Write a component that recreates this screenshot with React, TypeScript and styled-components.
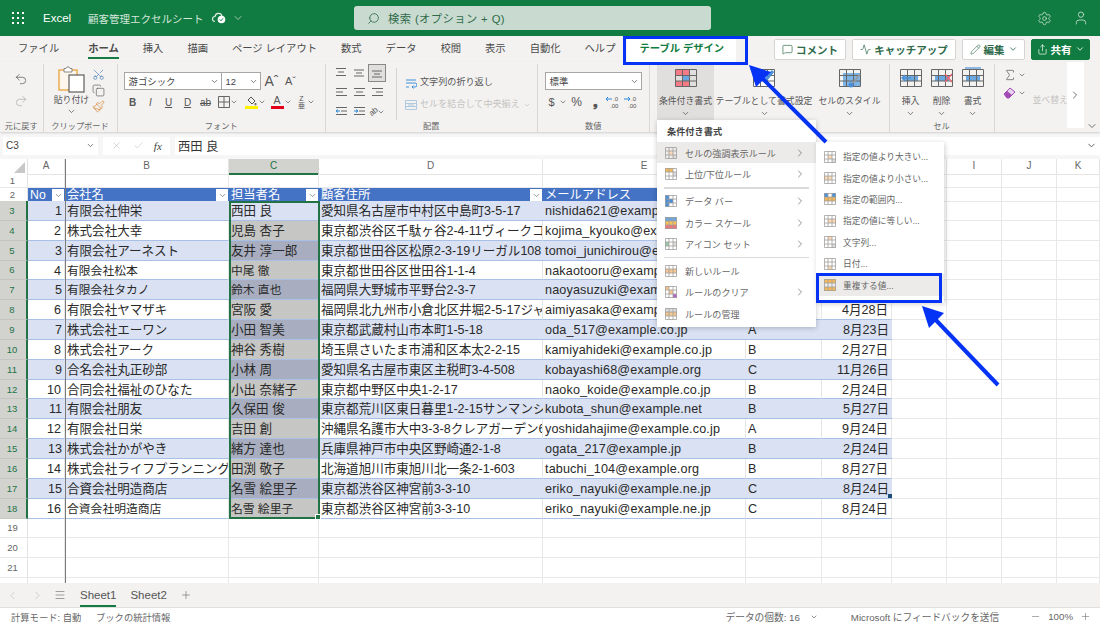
import React from "react";
import styled, {createGlobalStyle} from "styled-components";
import {Search, Settings, User, ChevronDown, ChevronRight, ChevronLeft, MessageSquare, Pencil, Share, Undo2, Redo2, Scissors, Copy, Paintbrush, X, Check, Sigma, Menu, Plus, Minus, Activity} from "lucide-react";

const GREEN = "#107c41";
const CHROME = "#f3f2f1";
const COLS = "28px 37px 164px 90px 224px 203px 76px 70px 55px 55px 55px 43px";

const Global = createGlobalStyle`
  html, body { margin: 0; padding: 0; background: #fff; }
  body { font-family: "Liberation Sans", "Noto Sans CJK JP", sans-serif; color: #333; }
`;

const Page = styled.div`
  position: relative;
  width: 1100px;
  height: 625px;
  overflow: hidden;
  display: flex;
  flex-direction: column;
`;

/* title bar */
const TitleBar = styled.div`
  height: 36px;
  flex: none;
  background: ${GREEN};
  display: flex;
  align-items: center;
  color: #fff;
`;
const Waffle = styled.div`
  width: 12px;
  margin-left: 12px;
  display: grid;
  grid-template-columns: repeat(3, 2px);
  gap: 3px;
  & > i { width: 2px; height: 2px; background: #fff; display: block; }
`;
const AppName = styled.span`
  margin-left: 19px;
  font-size: 11.5px;
  width: 45px;
`;
const DocName = styled.span`
  font-size: 10.5px;
  color: #d5e6dc;
  width: 124px;
`;
const DocIcons = styled.div`
  width: 142px;
  display: flex;
  align-items: center;
  gap: 6px;
  color: #d5e6dc;
`;
const SearchBox = styled.div`
  width: 357px;
  height: 24px;
  background: #c9dbd0;
  border-radius: 3px;
  display: flex;
  align-items: center;
  gap: 8px;
  padding-left: 13px;
  box-sizing: border-box;
  color: #2f6a4a;
  font-size: 11.3px;
  letter-spacing: .4px;
`;
const TitleRight = styled.div`
  margin-left: auto;
  display: flex;
  align-items: center;
  gap: 21px;
  padding-right: 11px;
  color: #cfe3d7;
`;

/* tab row */
const TabRow = styled.div`
  height: 26px;
  flex: none;
  background: ${CHROME};
  display: flex;
  align-items: center;
  padding-left: 18px;
  box-sizing: border-box;
  gap: 24px;
`;
const Tab = styled.span<{$active?: boolean}>`
  position: relative;
  font-size: 10.3px;
  line-height: 26px;
  color: #4a4a4a;
  font-weight: ${p => (p.$active ? 700 : 400)};
  ${p => p.$active && `
    margin-left: 5px;
    &::after { content: ""; position: absolute; left: 0; right: 0; bottom: 3px; height: 2px; background: ${GREEN}; }
  `}
`;
const DesignTab = styled.span`
  position: relative;
  z-index: 1;
  align-self: flex-start;
  height: 29px;
  padding: 0 12px;
  margin-left: -12px;
  background: #fff;
  font-size: 10.3px;
  line-height: 26px;
  font-weight: 700;
  color: ${GREEN};
`;
const TabActions = styled.div`
  margin-left: auto;
  display: flex;
  gap: 6px;
  padding-right: 10px;
`;
const ActionBtn = styled.div<{$w: number; $primary?: boolean}>`
  width: ${p => p.$w}px;
  height: 21px;
  box-sizing: border-box;
  display: flex;
  align-items: center;
  justify-content: center;
  gap: 3px;
  font-size: 10.5px;
  font-weight: 700;
  border-radius: 2px;
  background: ${p => (p.$primary ? GREEN : "#fff")};
  color: ${p => (p.$primary ? "#fff" : "#2f6a4a")};
  border: 1px solid ${p => (p.$primary ? GREEN : "#d6d4d2")};
`;

/* ribbon */
const Ribbon = styled.div`
  height: 70px;
  flex: none;
  background: ${CHROME};
  display: flex;
  box-shadow: 0 1px 2px rgba(0,0,0,.16);
  position: relative;
`;
const Group = styled.div<{$w: number; $last?: boolean}>`
  width: ${p => p.$w}px;
  flex: none;
  box-sizing: border-box;
  display: flex;
  flex-direction: column;
  margin: 2px 0 0;
  border-right: ${p => (p.$last ? "none" : "1px solid #dad8d6")};
`;
const GroupBody = styled.div<{$col?: boolean; $pad?: string; $gap?: number}>`
  flex: 1;
  min-height: 0;
  display: flex;
  flex-direction: ${p => (p.$col ? "column" : "row")};
  padding: ${p => p.$pad ?? "0"};
  gap: ${p => p.$gap ?? 0}px;
`;
const GroupLabel = styled.div`
  height: 13px;
  flex: none;
  font-size: 8.2px;
  line-height: 16px;
  text-align: center;
  color: #666;
`;
const ToolCol = styled.div<{$w?: number; $gap?: number}>`
  ${p => (p.$w ? `width:${p.$w}px;` : "")}
  flex: none;
  display: flex;
  flex-direction: column;
  align-items: center;
  gap: ${p => p.$gap ?? 0}px;
`;
const ToolText = styled.span<{$dim?: boolean; $size?: number}>`
  font-size: ${p => p.$size ?? 8.9}px;
  line-height: 13px;
  white-space: nowrap;
  color: ${p => (p.$dim ? "#c4c2c0" : "#555")};
`;
const Chevron = styled(ChevronDown)`
  color: #555;
  flex: none;
`;
const ToolRow = styled.div<{$gap?: number}>`
  display: flex;
  align-items: center;
  gap: ${p => p.$gap ?? 0}px;
`;
const SelectBox = styled.div<{$w: number}>`
  width: ${p => p.$w}px;
  height: 18px;
  box-sizing: border-box;
  background: #fff;
  border: 1px solid #a8a6a4;
  display: flex;
  align-items: center;
  justify-content: space-between;
  padding: 0 2px 0 4px;
  font-size: 9.4px;
  color: #444;
`;
const FontGlyph = styled.span<{$w: number; $italic?: boolean; $bold?: boolean; $under?: boolean; $strike?: boolean; $size?: number}>`
  width: ${p => p.$w}px;
  text-align: center;
  font-size: ${p => p.$size ?? 10}px;
  color: #555;
  font-style: ${p => (p.$italic ? "italic" : "normal")};
  font-weight: ${p => (p.$bold ? 700 : 400)};
  text-decoration: ${p => (p.$under ? "underline" : p.$strike ? "line-through" : "none")};
`;
const ColorGlyph = styled.div<{$c: string}>`
  width: 13px;
  display: flex;
  flex-direction: column;
  align-items: center;
  font-size: 10.5px;
  line-height: 11px;
  color: #555;
  &::after { content: ""; width: 13px; height: 3px; background: ${p => p.$c}; }
`;
const StackGlyph = styled.span`
  width: 10px;
  display: flex;
  flex-direction: column;
  align-items: center;
  font-size: 7px;
  line-height: 7px;
  color: #555;
`;
const AlignGrid = styled.div`
  display: grid;
  grid-template-columns: repeat(3, 18px);
  grid-auto-rows: 19.5px;
  align-items: center;
  justify-items: center;
  margin: -1px 0 0 6px;
  align-self: flex-start;
`;
const AlignCell = styled.div<{$on?: boolean}>`
  width: 18px;
  height: 18px;
  box-sizing: border-box;
  display: flex;
  align-items: center;
  justify-content: center;
  border: 1px solid ${p => (p.$on ? "#8a8886" : "transparent")};
  background: ${p => (p.$on ? "#e1dfdd" : "transparent")};
`;
const VLine = styled.div`
  width: 1px;
  height: 52px;
  background: #d6d4d2;
  margin: 4px 8px 0 10px;
`;
const BigTool = styled.div<{$w: number; $on?: boolean}>`
  width: ${p => p.$w}px;
  height: 58px;
  flex: none;
  display: flex;
  flex-direction: column;
  align-items: center;
  padding-top: 5px;
  box-sizing: border-box;
  background: ${p => (p.$on ? "#e1dfdd" : "transparent")};
  & > svg:first-child { margin-bottom: 6px; }
  & > svg:last-child { margin-top: 1px; }
`;
const Scroller = styled.div`
  width: 17px;
  height: 66px;
  margin-top: -2px;
  margin-left: auto;
  margin-right: 16px;
  background: #fff;
  display: flex;
  align-items: center;
  justify-content: center;
  color: #444;
  flex: none;
`;
const Collapse = styled(ChevronDown)`
  position: absolute;
  right: 2px;
  bottom: 0;
  color: #444;
`;

/* formula bar */
const FormulaBar = styled.div`
  height: 27px;
  flex: none;
  background: #f6f6f6;
  display: flex;
  align-items: center;
  gap: 5px;
  padding: 0 0 0 3px;
  box-sizing: border-box;
`;
const FieldBox = styled.div<{$w?: number}>`
  ${p => (p.$w ? `width:${p.$w}px;flex:none;` : "flex:1;")}
  height: 18px;
  background: #fff;
  display: flex;
  align-items: center;
  box-sizing: border-box;
  padding: 0 3px;
  font-size: 10px;
  color: #444;
  justify-content: space-between;
`;
const FieldTools = styled(FieldBox)`
  justify-content: space-around;
`;
const FormulaText = styled.span`
  font-size: 12.3px;
  color: #333;
`;
const Fx = styled.span`
  font-family: "Liberation Serif", serif;
  font-style: italic;
  font-size: 11px;
  color: #444;
`;

/* sheet */
const Sheet = styled.div`
  position: relative;
  flex: none;
  height: 424px;
  overflow: hidden;
  background: #fff;
`;
const HeadRow = styled.div`
  display: grid;
  grid-template-columns: ${COLS};
  height: 15px;
`;
const Row = styled.div<{$h: number}>`
  display: grid;
  grid-template-columns: ${COLS};
  height: ${p => p.$h}px;
`;
const Corner = styled.div`
  border-right: 1px solid #e1e1e1;
  position: relative;
  &::after {
    content: "";
    position: absolute;
    right: 2px;
    bottom: 2px;
    width: 11px;
    height: 11px;
    background: #c8c8c8;
    clip-path: polygon(100% 0, 100% 100%, 0 100%);
  }
`;
const ColHead = styled.div<{$sel?: boolean}>`
  font-size: 10px;
  line-height: 14px;
  text-align: center;
  color: ${p => (p.$sel ? "#217346" : "#666")};
  background: ${p => (p.$sel ? "#d2d2ce" : "#fff")};
  box-sizing: border-box;
  border-right: 1px solid ${p => (p.$sel ? "#d2d2ce" : "#e4e4e4")};
  border-bottom: ${p => (p.$sel ? "2px solid #217346" : "1px solid #e4e4e4")};
`;
const RowHead = styled.div<{$sel?: boolean}>`
  font-size: 9.5px;
  display: flex;
  align-items: center;
  justify-content: center;
  box-sizing: border-box;
  padding-right: 2px;
  color: ${p => (p.$sel ? "#217346" : "#666")};
  background: ${p => (p.$sel ? "#d2d2ce" : "#fff")};
  border-right: ${p => (p.$sel ? "2px solid #217346" : "1px solid #e4e4e4")};
  border-bottom: 1px solid ${p => (p.$sel ? "#c4c4c0" : "#e8e8e8")};
`;
const Empty = styled.div`
  box-sizing: border-box;
  border-right: 1px solid #e8e8e8;
  border-bottom: 1px solid #e8e8e8;
`;
const HeadCell = styled.div`
  box-sizing: border-box;
  background: #4472c4;
  color: #fff;
  font-size: 12.3px;
  line-height: 13.5px;
  display: flex;
  align-items: center;
  justify-content: space-between;
  padding: 1px 1px 0 2px;
  white-space: nowrap;
`;
const FilterBtn = styled.span`
  width: 12px;
  height: 12px;
  flex: none;
  background: #fff;
  display: flex;
  align-items: center;
  justify-content: center;
  color: #555;
`;
const Cell = styled.div<{$band: boolean; $sel?: boolean; $right?: boolean; $corner?: boolean; $small?: boolean; $mail?: boolean}>`
  position: relative;
  box-sizing: border-box;
  padding: 0 3px 0 2px;
  font-size: ${p => (p.$mail ? 12.6 : p.$small ? 11.8 : 12.55)}px;
  letter-spacing: ${p => (p.$mail ? ".15px" : "0")};
  line-height: 20px;
  white-space: nowrap;
  overflow: hidden;
  color: #2a2a2a;
  text-align: ${p => (p.$right ? "right" : "left")};
  background: ${p => (p.$sel ? (p.$band ? "#a8aebf" : "#c6c6c4") : p.$band ? "#d9e1f2" : "#fff")};
  border-bottom: 1px solid #a9c0e6;
  ${p => (p.$band ? "" : "border-right: 1px solid #e6e6e6;")}
  ${p => p.$corner && `
    &::after { content: ""; position: absolute; right: 0; bottom: 0; width: 4px; height: 4px; background: #1f4e79; }
  `}
`;
const Freeze = styled.div`
  position: absolute;
  left: 65px;
  top: 0;
  bottom: 0;
  width: 1px;
  background: #7a7a7a;
`;
const SelectionBox = styled.div`
  position: absolute;
  left: 229px;
  top: 42px;
  width: 91px;
  height: 318px;
  box-sizing: border-box;
  border: 2px solid #217346;
  pointer-events: none;
  &::after {
    content: "";
    position: absolute;
    right: -3px;
    bottom: -3px;
    width: 4px;
    height: 4px;
    background: #217346;
    border: 1px solid #fff;
  }
`;

/* sheet tabs, status */
const SheetTabs = styled.div`
  height: 24px;
  flex: none;
  background: ${CHROME};
  display: flex;
  align-items: center;
  color: #888;
  box-sizing: border-box;
  padding-left: 6px;
`;
const NavBtn = styled.span<{$w: number; $dark?: boolean}>`
  width: ${p => p.$w}px;
  display: flex;
  color: ${p => (p.$dark ? "#666" : "#bbb")};
`;
const SheetName = styled.span<{$on?: boolean}>`
  position: relative;
  font-size: 11.5px;
  color: #555;
  line-height: 24px;
  margin-right: 14px;
  ${p => p.$on && `
    &::after { content: ""; position: absolute; left: 0; right: 0; bottom: 0; height: 2px; background: ${GREEN}; }
  `}
`;
const AddSheet = styled(Plus)`
  color: #666;
  margin-left: -1px;
`;
const StatusBar = styled.div`
  height: 18px;
  flex: none;
  background: #fff;
  border-top: 1px solid #e1dfdd;
  box-sizing: border-box;
  display: flex;
  align-items: center;
  font-size: 9.3px;
  color: #666;
  padding-left: 11px;
`;
const StatusMode = styled.span`
  width: 85px;
`;
const StatusRight = styled.div`
  margin-left: auto;
  display: flex;
  align-items: center;
  color: #666;
  padding-right: 9px;
  font-size: 9.7px;
`;
const StatusCount = styled.span`
  margin-right: 10px;
`;
const StatusLink = styled.span`
  margin: 0 31px 0 33px;
`;
const StatusZoom = styled.span`
  margin: 0 7px;
`;

/* conditional format menu */
const PopMenu = styled.div`
  position: absolute;
  left: 657px;
  top: 120px;
  width: 159px;
  height: 207px;
  background: #fff;
  box-shadow: 0 1px 5px rgba(0,0,0,.22);
  display: flex;
  flex-direction: column;
`;
const MenuTitle = styled.div`
  height: 22px;
  line-height: 24px;
  padding-left: 10px;
  font-size: 9.2px;
  font-weight: 700;
  color: #444;
`;
const MenuItem = styled.div<{$on?: boolean}>`
  height: 21.3px;
  flex: none;
  display: flex;
  align-items: center;
  padding-left: 8px;
  padding-right: 10px;
  gap: 8px;
  font-size: 9.1px;
  color: #666;
  background: ${p => (p.$on ? "#edebe9" : "transparent")};
`;
const SubItem = styled(MenuItem)`
  height: 21.4px;
  gap: 7px;
  font-size: 8.7px;
`;
const MenuChevron = styled(ChevronRight)`
  margin-left: auto;
  color: #666;
`;
const MenuSep = styled.div`
  height: 1.5px;
  flex: none;
  margin: 2.5px 7px 2px;
  background: #dcdad8;
`;
const SubMenu = styled.div`
  position: absolute;
  left: 816px;
  top: 142px;
  width: 128px;
  height: 161px;
  padding-top: 4px;
  box-sizing: border-box;
  background: #fff;
  box-shadow: 1px 1px 5px rgba(0,0,0,.18);
  display: flex;
  flex-direction: column;
`;
const Marker = styled.div<{$l: number; $t: number; $w: number; $h: number}>`
  position: absolute;
  z-index: 2;
  left: ${p => p.$l}px;
  top: ${p => p.$t}px;
  width: ${p => p.$w}px;
  height: ${p => p.$h}px;
  box-sizing: border-box;
  border: 3.5px solid #0433f5;
`;
const ArrowLayer = styled.svg`
  position: absolute;
  z-index: 2;
  left: 0;
  top: 0;
  pointer-events: none;
`;

type Rec = {company: string; person: string; addr: string; mail: string; rank: string; date: string; small?: boolean};
const rows: Rec[] = [
  {company: "有限会社伸栄", person: "西田 良", addr: "愛知県名古屋市中村区中島町3-5-17", mail: "nishida621@example.ne.jp", rank: "", date: ""},
  {company: "株式会社大幸", person: "児島 杏子", addr: "東京都渋谷区千駄ヶ谷2-4-11ヴィークコート", mail: "kojima_kyouko@example.org", rank: "", date: ""},
  {company: "有限会社アーネスト", person: "友井 淳一郎", addr: "東京都世田谷区松原2-3-19リーガル108", mail: "tomoi_junichirou@example.jp", rank: "", date: ""},
  {company: "有限会社松本", person: "中尾 徹", addr: "東京都世田谷区世田谷1-1-4", mail: "nakaotooru@example.jp", rank: "", date: "", small: true},
  {company: "有限会社タカノ", person: "鈴木 直也", addr: "福岡県大野城市平野台2-3-7", mail: "naoyasuzuki@example.jp", rank: "", date: "", small: true},
  {company: "有限会社ヤマザキ", person: "宮阪 愛", addr: "福岡県北九州市小倉北区井堀2-5-17ジャパン", mail: "aimiyasaka@example.org", rank: "", date: "4月28日"},
  {company: "株式会社エーワン", person: "小田 智美", addr: "東京都武蔵村山市本町1-5-18", mail: "oda_517@example.co.jp", rank: "A", date: "8月23日"},
  {company: "株式会社アーク", person: "神谷 秀樹", addr: "埼玉県さいたま市浦和区本太2-2-15", mail: "kamiyahideki@example.co.jp", rank: "B", date: "2月27日"},
  {company: "合名会社丸正砂部", person: "小林 周", addr: "愛知県名古屋市東区主税町3-4-508", mail: "kobayashi68@example.org", rank: "C", date: "11月26日"},
  {company: "合同会社福祉のひなた", person: "小出 奈緒子", addr: "東京都中野区中央1-2-17", mail: "naoko_koide@example.co.jp", rank: "B", date: "2月24日"},
  {company: "有限会社朋友", person: "久保田 俊", addr: "東京都荒川区東日暮里1-2-15サンマンション", mail: "kubota_shun@example.net", rank: "B", date: "5月27日"},
  {company: "有限会社日栄", person: "吉田 創", addr: "沖縄県名護市大中3-3-8クレアガーデン601", mail: "yoshidahajime@example.co.jp", rank: "A", date: "9月24日"},
  {company: "株式会社かがやき", person: "緒方 達也", addr: "兵庫県神戸市中央区野崎通2-1-8", mail: "ogata_217@example.jp", rank: "B", date: "2月24日"},
  {company: "株式会社ライフプランニング", person: "田渕 敬子", addr: "北海道旭川市東旭川北一条2-1-603", mail: "tabuchi_104@example.org", rank: "B", date: "8月27日"},
  {company: "合資会社明造商店", person: "名雪 絵里子", addr: "東京都渋谷区神宮前3-3-10", mail: "eriko_nayuki@example.ne.jp", rank: "C", date: "8月24日"},
  {company: "合資会社明造商店", person: "名雪 絵里子", addr: "東京都渋谷区神宮前3-3-10", mail: "eriko_nayuki@example.ne.jp", rank: "C", date: "8月24日", small: true},
];
const LETTERS = ["A", "B", "C", "D", "E", "F", "G", "H", "I", "J", "K"];

// small spreadsheet glyph; fills lists [col,row,color]
const GridIcon = ({fills = []}: {fills?: [number, number, string][]}) => (
  <svg width={12} height={12} viewBox="0 0 12 12" style={{flex: "none"}}>
    {fills.map(([x, y, col], i) => <rect key={i} x={x * 4} y={y * 4} width={4} height={4} fill={col}/>)}
    <path d="M.5.5h11v11H.5zM4 .5v11M8 .5v11M.5 4h11M.5 8h11" fill="none" stroke="#a19f9d" strokeWidth=".8"/>
  </svg>
);
const Lines = ({w, h = 11, y = [1.5, 5, 8.5], x, mark}: {w: number; h?: number; y?: number[]; x: number[][]; mark?: string}) => (
  <svg width={w} height={h} viewBox={`0 0 ${w} ${h}`} style={{flex: "none"}}>
    {y.map((v, i) => <line key={i} x1={x[i][0]} x2={x[i][1]} y1={v} y2={v} stroke="#666" strokeWidth="1"/>)}
    {mark && <path d={mark} fill="none" stroke="#2b88d8" strokeWidth="1"/>}
  </svg>
);
const Tiny = ({size = 9}: {size?: number}) => <Chevron size={size} strokeWidth={2}/>;

const PasteIcon = () => (
  <svg width="28" height="27" viewBox="0 0 28 27">
    <rect x="1" y="4" width="18" height="20" fill="#fdf6ec" stroke="#e8a33d" strokeWidth="1.3"/>
    <path d="M6 4V2.5h2l1-1.5h2l1 1.5h2V4v2H6z" fill="#fff" stroke="#8a8886"/>
    <rect x="11" y="9" width="15" height="17" fill="#fff" stroke="#605e5c" strokeWidth="1.2"/>
  </svg>
);
const BigIcon = ({children}: {children: React.ReactNode}) => (
  <svg width="24" height="22" viewBox="0 0 24 22">{children}</svg>
);
const gridLines = "M1.5 2.5h21v17h-21zM8.5 2.5v17M15.5 2.5v17M1.5 8.5h21M1.5 14h21";
const DecIcon = ({flip}: {flip?: boolean}) => (
  <svg width="18" height="14" viewBox="0 0 18 14">
    <path d={flip ? "M1 4h6M5 2l2 2-2 2" : "M7 4H1M3 2L1 4l2 2"} fill="none" stroke="#2b88d8" strokeWidth="1"/>
    <text x="8" y="5.5" fontSize="6" fill="#555">.0</text>
    <text x="5" y="12.5" fontSize="6" fill="#555">.00</text>
  </svg>
);

function Top() {
  return (
    <TitleBar>
      <Waffle>{Array.from({length: 9}).map((_, i) => <i key={i}/>)}</Waffle>
      <AppName>Excel</AppName>
      <DocName>顧客管理エクセルシート</DocName>
      <DocIcons>
        <svg width="14" height="12" viewBox="0 0 14 12"><path d="M3 9.5a2.5 2.5 0 0 1 0-5A3.6 3.6 0 0 1 10 4" fill="none" stroke="#e4efe8" strokeWidth="1.2"/><circle cx="9.5" cy="7.5" r="3.8" fill="#fff"/><path d="M7.8 7.6l1.2 1.2 2-2.4" fill="none" stroke={GREEN} strokeWidth="1"/></svg>
        <ChevronDown size={12} strokeWidth={1.4}/>
      </DocIcons>
      <SearchBox><Search size={13} strokeWidth={1.5} style={{transform: "scaleX(-1)"}}/>検索 (オプション + Q)</SearchBox>
      <TitleRight><Settings size={15} strokeWidth={1.2}/><User size={16} strokeWidth={1.2}/></TitleRight>
    </TitleBar>
  );
}

function Tabs() {
  const names = ["挿入", "描画", "ページ レイアウト", "数式", "データ", "校閲", "表示", "自動化", "ヘルプ"];
  return (
    <TabRow>
      <Tab>ファイル</Tab>
      <Tab $active>ホーム</Tab>
      {names.map(n => <Tab key={n}>{n}</Tab>)}
      <DesignTab>テーブル デザイン</DesignTab>
      <TabActions>
        <ActionBtn $w={72}><MessageSquare size={11} strokeWidth={1.5}/>コメント</ActionBtn>
        <ActionBtn $w={104}><Activity size={11} strokeWidth={1.5}/>キャッチアップ</ActionBtn>
        <ActionBtn $w={63}><Pencil size={11} strokeWidth={1.3}/>編集<ChevronDown size={10}/></ActionBtn>
        <ActionBtn $w={59} $primary><Share size={11} strokeWidth={1.5}/>共有<ChevronDown size={10}/></ActionBtn>
      </TabActions>
    </TabRow>
  );
}

function RibbonBar() {
  return (
    <Ribbon>
      <Group $w={43.5}>
        <GroupBody $col $pad="8px 0 0" $gap={8}>
          <ToolCol $gap={8}><Undo2 size={14} strokeWidth={1.2} color="#555"/><Redo2 size={14} strokeWidth={1.2} color="#aaa"/></ToolCol>
        </GroupBody>
        <GroupLabel>元に戻す</GroupLabel>
      </Group>
      <Group $w={74}>
        <GroupBody $pad="2px 0 0 9px">
          <ToolCol $w={38}>
            <PasteIcon/>
            <ToolText style={{marginTop: 1}}>貼り付け</ToolText>
            <Tiny/>
          </ToolCol>
          <ToolCol $w={16} $gap={3}>
            <Scissors size={13} strokeWidth={1.2} color="#4a7fb5" style={{transform: "rotate(-90deg)", marginTop: 2}}/>
            <Copy size={13} strokeWidth={1.2} color="#555"/>
            <Paintbrush size={13} strokeWidth={1.4} color="#d98a3a"/>
          </ToolCol>
        </GroupBody>
        <GroupLabel>クリップボード</GroupLabel>
      </Group>
      <Group $w={208.5}>
        <GroupBody $col $pad="8px 0 0 6px" $gap={5}>
          <ToolRow>
            <SelectBox $w={98}>游ゴシック<Tiny/></SelectBox>
            <SelectBox $w={40} style={{marginLeft: -1}}>12<Tiny/></SelectBox>
            <FontGlyph $w={18} $size={14} style={{marginLeft: 2}}>Aˆ</FontGlyph>
            <FontGlyph $w={20} $size={11}>Aˇ</FontGlyph>
          </ToolRow>
          <ToolRow>
            <FontGlyph $w={12} $bold style={{marginLeft: 3}}>B</FontGlyph>
            <FontGlyph $w={12} $italic style={{marginLeft: 6}}>I</FontGlyph>
            <FontGlyph $w={12} $under style={{marginLeft: 6}}>U</FontGlyph>
            <FontGlyph $w={12} $under style={{marginLeft: 7}}>D</FontGlyph>
            <FontGlyph $w={14} $strike style={{marginLeft: 5}}>ab</FontGlyph>
            <svg width="12" height="12" viewBox="0 0 12 12" style={{marginLeft: 5}}><path d="M.5.5h11v11H.5zM6 .5v11M.5 6h11" fill="none" stroke="#666"/></svg>
            <Tiny size={8}/>
            <ColorGlyph $c="#fff200" style={{marginLeft: 7}}>
              <svg width="11" height="10" viewBox="0 0 11 10"><path d="M5 1l4 4-3 3-4-4zM9.5 7c.8 1 .8 2 0 2s-.8-1 0-2" fill="none" stroke="#555"/></svg>
            </ColorGlyph>
            <Tiny size={8}/>
            <ColorGlyph $c="#e3001b" style={{marginLeft: 5}}>A</ColorGlyph>
            <Tiny size={8}/>
            <StackGlyph style={{marginLeft: 5}}><span>Z</span><span>亜</span></StackGlyph>
            <Tiny size={8}/>
          </ToolRow>
        </GroupBody>
        <GroupLabel>フォント</GroupLabel>
      </Group>
      <Group $w={211.5}>
        <GroupBody>
          <AlignGrid>
            <AlignCell><Lines w={12} x={[[1, 11], [3, 9], [1, 11]]}/></AlignCell>
            <AlignCell><Lines w={12} y={[3, 6, 9]} x={[[1, 11], [3, 9], [1, 11]]}/></AlignCell>
            <AlignCell $on><Lines w={12} y={[4, 7, 10]} x={[[1, 11], [3, 9], [1, 11]]}/></AlignCell>
            <AlignCell><Lines w={12} x={[[1, 12], [1, 8], [1, 12]]}/></AlignCell>
            <AlignCell><Lines w={12} x={[[1, 12], [3, 10], [1, 12]]}/></AlignCell>
            <AlignCell><Lines w={12} x={[[1, 12], [5, 12], [1, 12]]}/></AlignCell>
            <AlignCell><Lines w={12} x={[[1, 12], [6, 12], [1, 12]]} mark="M5 5H1M3 3.5L1 5l2 1.5"/></AlignCell>
            <AlignCell><Lines w={12} x={[[1, 12], [6, 12], [1, 12]]} mark="M1 5h4M3 3.5L5 5 3 6.5"/></AlignCell>
            <AlignCell>
              <FontGlyph $w={10} $size={8} style={{transform: "rotate(-40deg)"}}>ab</FontGlyph>
              <Tiny size={8}/>
            </AlignCell>
          </AlignGrid>
          <VLine/>
          <ToolCol $gap={9} style={{alignItems: "flex-start", paddingTop: 12}}>
            <ToolRow $gap={3}>
              <svg width="12" height="12" viewBox="0 0 12 12"><path d="M1 3h10M1 6h9a2 2 0 0 1 0 4H7M8.5 8.5 7 10l1.5 1.5M1 10h3" fill="none" stroke="#2b88d8" strokeWidth=".9"/></svg>
              <ToolText $size={9.1}>文字列の折り返し</ToolText>
            </ToolRow>
            <ToolRow $gap={3}>
              <svg width="12" height="12" viewBox="0 0 12 12"><path d="M.5 1.5h11v9H.5zM.5 4.5h11M.5 7.5h11M3 6h6" fill="none" stroke="#a9c4dc" strokeWidth=".9"/></svg>
              <ToolText $dim $size={9.1}>セルを結合して中央揃え</ToolText>
              <Chevron size={8} color="#c4c2c0"/>
            </ToolRow>
          </ToolCol>
        </GroupBody>
        <GroupLabel>配置</GroupLabel>
      </Group>
      <Group $w={112.5}>
        <GroupBody $col $pad="8px 0 0 7px" $gap={5}>
          <SelectBox $w={97}>標準<Tiny/></SelectBox>
          <ToolRow>
            <FontGlyph $w={14} $size={11}>$</FontGlyph>
            <Tiny size={8}/>
            <FontGlyph $w={20} $size={12}>%</FontGlyph>
            <FontGlyph $w={18} $size={12} $bold>❟</FontGlyph>
            <DecIcon/>
            <DecIcon flip/>
          </ToolRow>
        </GroupBody>
        <GroupLabel>数値</GroupLabel>
      </Group>
      <Group $w={239.5}>
        <GroupBody $pad="0 0 0 7px" style={{marginTop: -2}}>
          <BigTool $w={57} $on>
            <BigIcon>
              <rect x="1.5" y="2.5" width="7" height="6" fill="#f47a85"/><rect x="8.5" y="2.5" width="7" height="6" fill="#f47a85"/><rect x="8.5" y="8.5" width="7" height="5.5" fill="#6ba7e0"/><rect x="1.5" y="14" width="14" height="5.5" fill="#f47a85"/>
              <path d={gridLines} fill="none" stroke="#666"/>
            </BigIcon>
            <ToolText>条件付き書式</ToolText>
            <Tiny/>
          </BigTool>
          <BigTool $w={100}>
            <BigIcon>
              <path d={gridLines} fill="#fff" stroke="#666"/>
              <path d="M13 14l8-10" stroke="#4a90d9" strokeWidth="3"/>
            </BigIcon>
            <ToolText>テーブルとして書式設定</ToolText>
            <Tiny/>
          </BigTool>
          <BigTool $w={71}>
            <BigIcon>
              <rect x="5" y="6" width="17" height="13" fill="#7db4e6"/>
              <path d={gridLines} fill="none" stroke="#666"/>
              <path d="M15 16l7-9" stroke="#999" strokeWidth="1.6"/>
              <circle cx="13" cy="18" r="2.5" fill="#4a90d9"/>
            </BigIcon>
            <ToolText>セルのスタイル</ToolText>
            <Tiny/>
          </BigTool>
        </GroupBody>
      </Group>
      <Group $w={105}>
        <GroupBody $pad="0 0 0 6px" $gap={1} style={{marginTop: -2}}>
          {[
            ["挿入", <path key="i" d="M12 11H3M6 8l-3 3 3 3" stroke="#4a90d9" strokeWidth="1.4" fill="none"/>],
            ["削除", <path key="d" d="M15 7l7 8M22 7l-7 8" stroke="#e8636f" strokeWidth="1.2" fill="none"/>],
            ["書式", <path key="f" d="M4 1h16" stroke="#4a90d9" strokeWidth="1.2" fill="none"/>],
          ].map(([t, mark], i) => (
            <BigTool key={i} $w={30}>
              <BigIcon>
                <rect x="5" y="8.5" width="14" height="5.5" fill="#6ba7e0"/>
                <path d={gridLines} fill="none" stroke="#666"/>
                {mark}
              </BigIcon>
              <ToolText>{t}</ToolText>
              <Tiny/>
            </BigTool>
          ))}
        </GroupBody>
        <GroupLabel>セル</GroupLabel>
      </Group>
      <Group $w={105} $last>
        <GroupBody>
          <ToolCol $gap={4} style={{marginLeft: 8, marginTop: 4, alignItems: "flex-start"}}>
            <ToolRow $gap={1}><Sigma size={14} strokeWidth={1.2} color="#555"/><Tiny size={8}/></ToolRow>
            <ToolRow $gap={1}>
              <svg width="14" height="14" viewBox="0 0 14 14"><path d="M1 8l6-6 5 4-6 6H4z" fill="#e9d3ee" stroke="#a24bb5"/><path d="M1 8l3-3 5 4-3 3H4z" fill="#a24bb5"/></svg>
              <Tiny size={8}/>
            </ToolRow>
            <ToolText $dim style={{marginLeft: 30, marginTop: -10, width: 34, overflow: "hidden"}}>並べ替え</ToolText>
          </ToolCol>
          <Scroller><ChevronRight size={12} strokeWidth={1.5}/></Scroller>
        </GroupBody>
      </Group>
      <Collapse size={12} strokeWidth={1.5}/>
    </Ribbon>
  );
}

function Formula() {
  return (
    <FormulaBar>
      <FieldBox $w={95}>C3<Tiny size={9}/></FieldBox>
      <FieldTools $w={67}>
        <X size={11} strokeWidth={1} color="#aaa"/><Check size={11} strokeWidth={1} color="#aaa"/><Fx>fx</Fx>
      </FieldTools>
      <FieldBox><FormulaText>西田 良</FormulaText><Tiny size={11}/></FieldBox>
    </FormulaBar>
  );
}

const blanks = (n: number) => Array.from({length: n}).map((_, i) => <Empty key={i}/>);

function Grid() {
  const filter = <FilterBtn><ChevronDown size={9} strokeWidth={1.6}/></FilterBtn>;
  return (
    <Sheet>
      <HeadRow>
        <Corner/>
        {LETTERS.map(l => <ColHead key={l} $sel={l === "C"}>{l}</ColHead>)}
      </HeadRow>
      <Row $h={13.5}><RowHead>1</RowHead>{blanks(11)}</Row>
      <Row $h={13.5}>
        <RowHead>2</RowHead>
        <HeadCell>No{filter}</HeadCell>
        <HeadCell>会社名{filter}</HeadCell>
        <HeadCell>担当者名{filter}</HeadCell>
        <HeadCell>顧客住所{filter}</HeadCell>
        <HeadCell>メールアドレス</HeadCell>
        <HeadCell/>
        <HeadCell/>
        {blanks(4)}
      </Row>
      {rows.map((r, i) => {
        const band = i % 2 === 0;
        return (
          <Row $h={19.85} key={i}>
            <RowHead $sel>{i + 3}</RowHead>
            <Cell $band={band} $right>{i + 1}</Cell>
            <Cell $band={band} $small={r.small}>{r.company}</Cell>
            <Cell $band={band} $sel={i > 0} $small={r.small}>{r.person}</Cell>
            <Cell $band={band}>{r.addr}</Cell>
            <Cell $band={band} $mail>{r.mail}</Cell>
            <Cell $band={band}>{r.rank}</Cell>
            <Cell $band={band} $right $corner={i === 14}>{r.date}</Cell>
            {blanks(4)}
          </Row>
        );
      })}
      {[19, 20, 21, 22].map(n => (
        <Row $h={19.85} key={n}><RowHead>{n < 22 ? n : ""}</RowHead>{blanks(11)}</Row>
      ))}
      <Freeze/>
      <SelectionBox/>
    </Sheet>
  );
}

const submenu: [string, React.ReactNode][] = [
  ["指定の値より大きい...", <GridIcon fills={[[1, 1, "#fbd9b5"], [2, 2, "#ddd"]]}/>],
  ["指定の値より小さい...", <GridIcon fills={[[0, 1, "#fbd9b5"], [1, 1, "#fbd9b5"]]}/>],
  ["指定の範囲内...", <GridIcon fills={[[0, 0, "#4a90d9"], [2, 0, "#4a90d9"], [0, 1, "#f5b85b"], [1, 1, "#f5b85b"], [2, 1, "#f5b85b"]]}/>],
  ["指定の値に等しい...", <GridIcon fills={[[1, 1, "#fbd9b5"], [2, 1, "#fbd9b5"]]}/>],
  ["文字列...", <GridIcon fills={[[1, 0, "#fbd9b5"], [2, 2, "#ddd"]]}/>],
  ["日付...", <GridIcon fills={[[1, 2, "#fbd9b5"]]}/>],
  ["重複する値...", <GridIcon fills={[[0, 0, "#f5b85b"], [1, 0, "#f5b85b"], [2, 0, "#f5b85b"], [0, 2, "#f5b85b"], [1, 2, "#f5b85b"], [2, 2, "#f5b85b"]]}/>],
];

function Popups() {
  const arrow = <MenuChevron size={12} strokeWidth={1.4}/>;
  return (
    <>
      <PopMenu>
        <MenuTitle>条件付き書式</MenuTitle>
        <MenuItem $on><GridIcon fills={[[1, 1, "#fbd9b5"], [2, 2, "#ddd"]]}/>セルの強調表示ルール{arrow}</MenuItem>
        <MenuItem><GridIcon fills={[[0, 0, "#f5b85b"], [1, 0, "#f5b85b"], [2, 1, "#ddd"]]}/>上位/下位ルール{arrow}</MenuItem>
        <MenuSep/>
        <MenuItem><GridIcon fills={[[0, 0, "#4a90d9"], [0, 1, "#4a90d9"], [0, 2, "#4a90d9"], [1, 1, "#4a90d9"]]}/>データ バー{arrow}</MenuItem>
        <MenuItem><GridIcon fills={[[0, 0, "#6ba7e0"], [1, 0, "#6ba7e0"], [2, 0, "#6ba7e0"], [0, 1, "#f5c15b"], [1, 1, "#f5c15b"], [2, 1, "#f5c15b"], [0, 2, "#f4707c"], [1, 2, "#f4707c"], [2, 2, "#f4707c"]]}/>カラー スケール{arrow}</MenuItem>
        <MenuItem><GridIcon fills={[[0, 1, "#9ac7a8"], [2, 1, "#ddd"]]}/>アイコン セット{arrow}</MenuItem>
        <MenuSep/>
        <MenuItem><GridIcon fills={[[0, 1, "#f5c690"], [1, 1, "#f5c690"], [2, 1, "#f5c690"]]}/>新しいルール</MenuItem>
        <MenuItem><GridIcon fills={[[0, 0, "#f5c690"], [1, 1, "#f5c690"], [2, 2, "#b565c9"]]}/>ルールのクリア{arrow}</MenuItem>
        <MenuItem><GridIcon fills={[[0, 1, "#f5c690"], [1, 1, "#f5c690"], [2, 1, "#f5c690"], [0, 0, "#ddd"], [1, 0, "#ddd"], [2, 0, "#ddd"]]}/>ルールの管理</MenuItem>
      </PopMenu>
      <SubMenu>
        {submenu.map(([t, icon], i) => (
          <SubItem key={t} $on={i === 6}>{icon}{t}</SubItem>
        ))}
      </SubMenu>
    </>
  );
}

export default function App() {
  return (
    <Page>
      <Global/>
      <Top/>
      <Tabs/>
      <RibbonBar/>
      <Formula/>
      <Grid/>
      <SheetTabs>
        <NavBtn $w={25}><ChevronLeft size={13} strokeWidth={1.2}/></NavBtn>
        <NavBtn $w={23}><ChevronRight size={13} strokeWidth={1.2}/></NavBtn>
        <NavBtn $w={26} $dark><Menu size={12} strokeWidth={1.2}/></NavBtn>
        <SheetName $on>Sheet1</SheetName>
        <SheetName>Sheet2</SheetName>
        <AddSheet size={12} strokeWidth={1.2}/>
      </SheetTabs>
      <StatusBar>
        <StatusMode>計算モード: 自動</StatusMode>
        <span>ブックの統計情報</span>
        <StatusRight>
          <StatusCount>データの個数: 16</StatusCount>
          <Tiny size={8}/>
          <StatusLink>Microsoft にフィードバックを送信</StatusLink>
          <Minus size={11} strokeWidth={1.2}/>
          <StatusZoom>100%</StatusZoom>
          <Plus size={11} strokeWidth={1.2}/>
        </StatusRight>
      </StatusBar>
      <Popups/>
      <Marker $l={623} $t={36} $w={125} $h={29}/>
      <Marker $l={816} $t={273} $w={126} $h={30}/>
      <ArrowLayer width="1100" height="625" viewBox="0 0 1100 625">
        <path d="M826 142 L758 74" stroke="#0433f5" strokeWidth="4"/>
        <path d="M749 65 L771 72 L756 87 Z" fill="#0433f5"/>
        <path d="M998 385 L932 316" stroke="#0433f5" strokeWidth="4"/>
        <path d="M922 306 L944 313 L929 328 Z" fill="#0433f5"/>
      </ArrowLayer>
    </Page>
  );
}
